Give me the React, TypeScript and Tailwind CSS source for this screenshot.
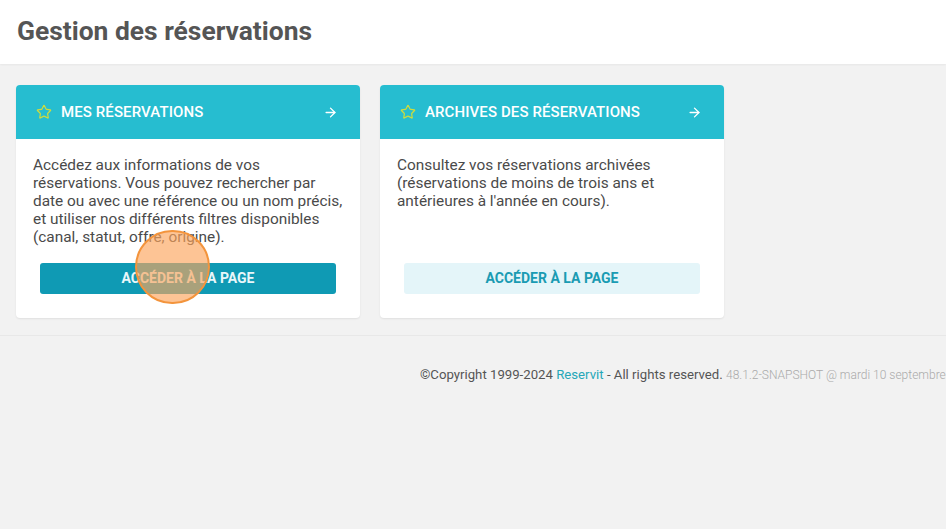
import { ArrowRight, Star } from 'lucide-react';

interface ShortcutCardProps {
  title: string;
  text: string;
  primary?: boolean;
}

function ShortcutCard({ title, text, primary = false }: ShortcutCardProps) {
  return (
    <div className="w-[344px] bg-white rounded-[4px] shadow-[0_1px_2px_rgba(0,0,0,0.08)] overflow-hidden">
      {/* Header */}
      <div className="h-[54px] bg-[#26bdd0] flex items-center pl-[20px] pr-[22px]">
        <Star className="w-[16px] h-[16px] text-[#cfdc3c]" strokeWidth={1.8} />
        <span className="ml-[9px] text-white text-[15px] font-medium tracking-[0.1px]">{title}</span>
        <ArrowRight className="ml-auto w-[15px] h-[15px] text-white" strokeWidth={2.2} />
      </div>

      {/* Body */}
      <div className="px-[17px] pt-[17px] pb-[24px]">
        <p className="h-[90px] text-[15.4px] leading-[18px] text-[#4a4a4a]">{text}</p>
        <div className="mt-[17px] px-[7px]">
          <div
            className={`h-[31px] rounded-[3px] flex items-center justify-center text-[14px] font-bold ${
              primary ? 'bg-[#0f9ab4] text-[#e8f7fa]' : 'bg-[#e4f5f9] text-[#1a9bb3]'
            }`}
          >
            ACCÉDER À LA PAGE
          </div>
        </div>
      </div>
    </div>
  );
}

export default function App() {
  return (
    <div className="relative w-[946px] h-[529px] bg-[#f2f2f2] overflow-hidden font-['Roboto',sans-serif]">
      <header className="h-[64px] bg-white flex items-center px-[17px] shadow-[0_1px_2px_rgba(0,0,0,0.05)]">
        <h1 className="text-[26.4px] font-bold text-[#555555]">Gestion des réservations</h1>
      </header>

      <main className="flex gap-[20px] px-[16px] pt-[21px] pb-[17px] border-b border-[#e8e8e8]">
        <ShortcutCard
          primary
          title="MES RÉSERVATIONS"
          text="Accédez aux informations de vos réservations. Vous pouvez rechercher par date ou avec une référence ou un nom précis, et utiliser nos différents filtres disponibles (canal, statut, offre, origine)."
        />
        <ShortcutCard
          title="ARCHIVES DES RÉSERVATIONS"
          text="Consultez vos réservations archivées (réservations de moins de trois ans et antérieures à l'année en cours)."
        />
      </main>

      <footer className="pt-[29px] pl-[420px] whitespace-nowrap text-[13.2px] text-[#555555]">
        ©Copyright 1999-2024 <span className="text-[#26a7b8]">Reservit</span> - All rights reserved.{' '}
        <span className="text-[12px] font-light text-[#aaaaaa]">48.1.2-SNAPSHOT @ mardi 10 septembre 2024</span>
      </footer>

      {/* click marker */}
      <div className="absolute left-[135px] top-[230px] w-[75px] h-[74px] rounded-full border-2 border-[#f3943c] bg-[#fca45c]/65" />
    </div>
  );
}
